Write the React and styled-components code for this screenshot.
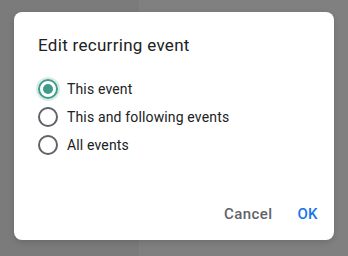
import React, { useState } from "react";
import styled, { createGlobalStyle } from "styled-components";

const Global = createGlobalStyle`
  html, body {
    margin: 0;
    padding: 0;
    background: #7d7d7d;
    font-family: Roboto, "Liberation Sans", Arial, sans-serif;
  }
`;

const Backdrop = styled.div`
  width: 348px;
  height: 256px;
  padding: 12px 14px;
  box-sizing: border-box;
  background: linear-gradient(to right, #7b7b7b 0, #7b7b7b 139px, #808080 139px);
`;

const Dialog = styled.div`
  width: 320px;
  height: 228px;
  box-sizing: border-box;
  background: #fff;
  border-radius: 8px;
  padding: 21px 8px 10px 24px;
  display: flex;
  flex-direction: column;
  box-shadow: 0 2px 6px rgba(0, 0, 0, 0.15);
`;

const Title = styled.h2`
  margin: 0;
  font-size: 17px;
  line-height: 24px;
  font-weight: 400;
  letter-spacing: 0.3px;
  color: #202124;
`;

const Options = styled.div`
  display: flex;
  flex-direction: column;
  gap: 8px;
  margin-top: 22px;
`;

const Option = styled.label`
  display: flex;
  align-items: center;
  gap: 9px;
  height: 20px;
  font-size: 14px;
  letter-spacing: 0.15px;
  color: #202124;
  cursor: pointer;
`;

const Radio = styled.span`
  position: relative;
  width: 20px;
  height: 20px;
  box-sizing: border-box;
  border-radius: 50%;
  border: 2px solid ${(p) => (p.$checked ? "#3f9b8a" : "#5f6368")};
  box-shadow: ${(p) => (p.$checked ? "0 0 0 2px rgba(63,155,138,0.2)" : "none")};
  &::after {
    content: "";
    position: absolute;
    left: 3px;
    top: 3px;
    width: 10px;
    height: 10px;
    border-radius: 50%;
    background: #3f9b8a;
    display: ${(p) => (p.$checked ? "block" : "none")};
  }
`;

const Actions = styled.div`
  margin-top: auto;
  display: flex;
  justify-content: flex-end;
  gap: 9px;
`;

const Button = styled.button`
  border: none;
  background: none;
  padding: 0 8px;
  height: 32px;
  font-family: inherit;
  font-size: 15px;
  font-weight: 500;
  letter-spacing: 0.4px;
  color: ${(p) => (p.$primary ? "#1a73e8" : "#5f6368")};
  cursor: pointer;
`;

const options = ["This event", "This and following events", "All events"];

export default function App() {
  const [value, setValue] = useState(0);
  return (
    <>
      <Global />
      <Backdrop>
        <Dialog>
          <Title>Edit recurring event</Title>
          <Options>
            {options.map((o, i) => (
              <Option key={o} onClick={() => setValue(i)}>
                <Radio $checked={value === i} />
                {o}
              </Option>
            ))}
          </Options>
          <Actions>
            <Button>Cancel</Button>
            <Button $primary>OK</Button>
          </Actions>
        </Dialog>
      </Backdrop>
    </>
  );
}
